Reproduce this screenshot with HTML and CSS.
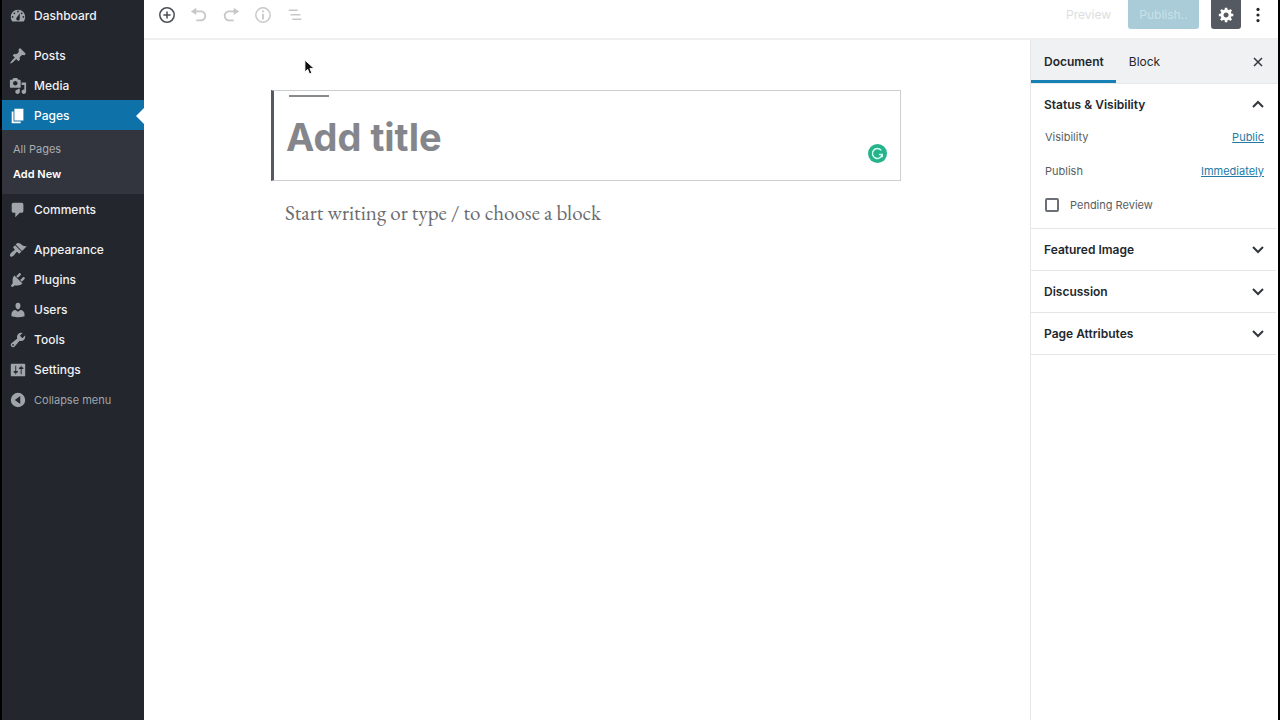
FILE: index.html
```html
<!DOCTYPE html>
<html lang="en">
<head>
<meta charset="utf-8">
<meta name="viewport" content="width=device-width, initial-scale=1">
<title>Add New Page</title>
<link rel="stylesheet" href="styles.css">
</head>
<body>
<div class="app">
  <nav class="menu" aria-label="Main menu">
    <a class="menu-item" href="#"><svg class="menu-icon" viewBox="0 0 20 20"><path d="M3.76 16h12.48c1.1-1.37 1.76-3.11 1.76-5 0-4.42-3.58-8-8-8s-8 3.58-8 8c0 1.89.66 3.63 1.76 5zM10 4c.55 0 1 .45 1 1s-.45 1-1 1-1-.45-1-1 .45-1 1-1zM6 6c.55 0 1 .45 1 1s-.45 1-1 1-1-.45-1-1 .45-1 1-1zm8 0c.55 0 1 .45 1 1s-.45 1-1 1-1-.45-1-1 .45-1 1-1zm-5.37 5.55L12 7v6c0 1.1-.9 2-2 2s-2-.9-2-2c0-.57.24-1.08.63-1.45zM4 10c.55 0 1 .45 1 1s-.45 1-1 1-1-.45-1-1 .45-1 1-1zm12 0c.55 0 1 .45 1 1s-.45 1-1 1-1-.45-1-1 .45-1 1-1z"/></svg>Dashboard</a>
    <a class="menu-item group-start" href="#"><svg class="menu-icon" viewBox="0 0 20 20"><path d="M10.44 3.02l1.82-1.82 6.36 6.35-1.83 1.82c-1.05-.68-2.48-.57-3.41.36l-.75.75c-.92.93-1.04 2.35-.35 3.41l-1.83 1.82-2.41-2.41-2.8 2.79c-.42.42-3.38 2.71-3.8 2.29s1.86-3.39 2.28-3.81l2.79-2.79L4.1 9.36l1.83-1.82c1.05.69 2.48.57 3.4-.36l.75-.75c.93-.92 1.05-2.35.36-3.41z"/></svg>Posts</a>
    <a class="menu-item" href="#"><svg class="menu-icon" viewBox="0 0 20 20"><path d="M13 11V4c0-.55-.45-1-1-1h-1.67L9 1H5L3.67 3H2c-.55 0-1 .45-1 1v7c0 .55.45 1 1 1h10c.55 0 1-.45 1-1zM7 4.5c1.38 0 2.5 1.12 2.5 2.5S8.38 9.5 7 9.5 4.5 8.38 4.5 7 5.62 4.5 7 4.5zM14 6h5v10.5c0 1.38-1.12 2.5-2.5 2.5S14 17.88 14 16.5s1.12-2.5 2.5-2.5c.17 0 .34.02.5.05V9h-3V6zm-4 8.05V13h2v3.5c0 1.38-1.12 2.5-2.5 2.5S7 17.88 7 16.5 8.12 14 9.5 14c.17 0 .34.02.5.05z"/></svg>Media</a>
    <a class="menu-item current" href="#"><svg class="menu-icon" viewBox="0 0 20 20"><path d="M6 15V2h10v13H6zm-1 1h8v2H3V5h2v11z"/></svg>Pages</a>
    <div class="submenu">
      <a class="submenu-item" href="#">All Pages</a>
      <a class="submenu-item active" href="#">Add New</a>
    </div>
    <a class="menu-item" href="#"><svg class="menu-icon" viewBox="0 0 20 20"><path d="M5 2h9c1.1 0 2 .9 2 2v7c0 1.1-.9 2-2 2h-2l-5 5v-5H5c-1.1 0-2-.9-2-2V4c0-1.1.9-2 2-2z"/></svg>Comments</a>
    <a class="menu-item group-start" href="#"><svg class="menu-icon" viewBox="0 0 20 20"><path d="M14.48 11.06L7.41 3.99l1.5-1.5c.5-.56 2.3-.47 3.51.32 1.21.8 1.43 1.28 2.91 2.1 1.18.64 2.45 1.26 4.45.85zm-.71.71L6.7 4.7 4.93 6.47c-.39.39-.39 1.02 0 1.41l1.06 1.06c.39.39.39 1.03 0 1.42-.6.6-1.43 1.11-2.21 1.69-.35.26-.7.53-1.01.84C1.43 14.23.4 16.08 1.4 17.07c.99 1 2.84-.03 4.18-1.36.31-.31.58-.66.85-1.02.57-.78 1.08-1.61 1.69-2.21.39-.39 1.02-.39 1.41 0l1.06 1.06c.39.39 1.02.39 1.41 0z"/></svg>Appearance</a>
    <a class="menu-item" href="#"><svg class="menu-icon" viewBox="0 0 20 20"><path d="M13.11 4.36L9.87 7.6 8 5.73l3.24-3.24c.35-.34 1.05-.2 1.56.32.52.51.66 1.21.31 1.55zm-8 1.77l.91-1.12 9.01 9.01-1.19.84c-.71.71-2.63 1.16-3.82 1.16H6.14L4.9 17.26c-.59.59-1.54.59-2.12 0-.59-.58-.59-1.53 0-2.12l1.24-1.24v-3.88c0-1.13.4-3.19 1.09-3.89zm7.26 3.97l3.24-3.24c.34-.35 1.04-.21 1.55.31.52.51.66 1.21.31 1.55l-3.24 3.25z"/></svg>Plugins</a>
    <a class="menu-item" href="#"><svg class="menu-icon" viewBox="0 0 20 20"><path d="M10 9.25c-2.27 0-2.73-3.44-2.73-3.44C7 4.02 7.82 2 9.97 2c2.16 0 2.98 2.02 2.71 3.81 0 0-.41 3.44-2.68 3.44zm0 2.57L12.72 10c2.39 0 4.52 2.33 4.52 4.53v2.49s-3.65 1.13-7.24 1.13c-3.65 0-7.24-1.13-7.24-1.13v-2.49c0-2.25 1.94-4.48 4.47-4.48z"/></svg>Users</a>
    <a class="menu-item" href="#"><svg class="menu-icon" viewBox="0 0 20 20"><path d="M16.68 9.77c-1.34 1.34-3.3 1.67-4.95.99l-5.41 6.52c-.99.99-2.59.99-3.58 0s-.99-2.59 0-3.57l6.52-5.42c-.68-1.65-.35-3.61.99-4.95 1.28-1.28 3.12-1.62 4.72-1.06l-2.89 2.89 2.82 2.82 2.86-2.87c.53 1.58.18 3.39-1.08 4.65zM3.81 16.21c.4.39 1.04.39 1.43 0 .4-.4.4-1.04 0-1.43-.39-.4-1.03-.4-1.43 0-.39.39-.39 1.03 0 1.43z"/></svg>Tools</a>
    <a class="menu-item" href="#"><svg class="menu-icon" viewBox="0 0 20 20"><path d="M18 16V4c0-.55-.45-1-1-1H3c-.55 0-1 .45-1 1v12c0 .55.45 1 1 1h14c.55 0 1-.45 1-1zM8 11h1c.55 0 1 .45 1 1s-.45 1-1 1H8v1.5c0 .28-.22.5-.5.5s-.5-.22-.5-.5V13H6c-.55 0-1-.45-1-1s.45-1 1-1h1V5.500c0-.28.22-.5.5-.5s.5.22.5.5V11zm5-2h-1c-.55 0-1-.45-1-1s.45-1 1-1h1V5.500c0-.28.22-.5.5-.5s.5.22.5.5V7h1c.55 0 1 .45 1 1s-.45 1-1 1h-1v5.500c0 .28-.22.5-.5.5s-.5-.22-.5-.5V9z"/></svg>Settings</a>
    <button class="menu-item collapse" type="button"><svg class="menu-icon" viewBox="0 0 20 20"><path fill-rule="evenodd" d="M10 2a8 8 0 1 0 0 16 8 8 0 0 0 0-16zM12.500 5.500v9L6.500 10z"/></svg>Collapse menu</button>
  </nav>

  <div class="editor">
    <header class="toolbar">
      <button class="tool" type="button" aria-label="Add block"><svg viewBox="0 0 20 20"><circle cx="10" cy="10" r="8" fill="none" stroke="currentColor" stroke-width="1.700"/><path d="M10 6v8M6 10h8" stroke="currentColor" stroke-width="1.700"/></svg></button>
      <button class="tool muted" type="button" aria-label="Undo"><svg viewBox="0 0 20 20"><path d="M12 5H7V2L1 6l6 4V7h5c2.200 0 4 1.800 4 4s-1.800 4-4 4H7v2h5c3.300 0 6-2.700 6-6s-2.700-6-6-6z"/></svg></button>
      <button class="tool muted" type="button" aria-label="Redo"><svg viewBox="0 0 20 20"><path d="M8 5h5V2l6 4-6 4V7H8c-2.200 0-4 1.800-4 4s1.800 4 4 4h5v2H8c-3.300 0-6-2.700-6-6s2.700-6 6-6z"/></svg></button>
      <button class="tool muted" type="button" aria-label="Content structure"><svg viewBox="0 0 20 20"><circle cx="10" cy="10" r="8" fill="none" stroke="currentColor" stroke-width="1.600"/><path d="M9 5h2v2H9zM9 8.500h2V15H9z"/></svg></button>
      <button class="tool muted" type="button" aria-label="Block navigation"><svg viewBox="0 0 20 20"><path d="M3 4h10v1.600H3zM5 9h11v1.600H5zM7 14h10v1.600H7z"/></svg></button>
      <div class="actions">
        <button class="preview" type="button">Preview</button>
        <button class="publish" type="button">Publish..</button>
        <button class="cog" type="button" aria-label="Settings"><svg viewBox="0 0 20 20"><path d="M18 12h-2.180c-.17.7-.44 1.350-.81 1.930l1.540 1.540-2.100 2.100-1.540-1.540c-.58.36-1.230.63-1.910.79V19H8v-2.180c-.68-.16-1.330-.43-1.910-.79l-1.540 1.540-2.120-2.120 1.540-1.540c-.36-.58-.63-1.230-.79-1.910H1V9.030h2.170c.16-.7.44-1.350.8-1.940L2.430 5.550l2.100-2.100 1.540 1.540c.58-.37 1.240-.64 1.930-.81V2h3v2.180c.68.16 1.330.43 1.910.79l1.540-1.540 2.120 2.120-1.540 1.540c.36.59.64 1.240.8 1.940H18V12zm-8.500 1.500c1.660 0 3-1.340 3-3s-1.340-3-3-3-3 1.340-3 3 1.340 3 3 3z"/></svg></button>
        <button class="more" type="button" aria-label="More"><svg viewBox="0 0 20 20"><circle cx="10" cy="3" r="2"/><circle cx="10" cy="10" r="2"/><circle cx="10" cy="17" r="2"/></svg></button>
      </div>
    </header>

    <div class="workspace">
      <main class="canvas">
        <div class="document">
          <div class="title-block">
            <input class="title-input" type="text" placeholder="Add title" aria-label="Add title">
            <svg class="checker" viewBox="0 0 20 20"><circle cx="10" cy="10" r="10" fill="#24b38b"/><path d="M13.900 6.700A5.200 5.200 0 1 0 15 11h-3.500M15 10.500V14" fill="none" stroke="#d5fff1" stroke-width="1.500"/></svg>
          </div>
          <input class="body-input" type="text" placeholder="Start writing or type / to choose a block" aria-label="Page content">
        </div>
        <svg class="pointer" viewBox="0 0 12 18"><path d="M1 1v13l3-3 2 5 2.500-1-2-5H11z" fill="#111" stroke="#fff"/></svg>
      </main>

      <aside class="settings">
        <div class="tabs">
          <button class="tab selected" type="button">Document</button>
          <button class="tab" type="button">Block</button>
          <button class="close" type="button" aria-label="Close settings"><svg viewBox="0 0 14 14"><path d="M3 3l8 8M11 3l-8 8"/></svg></button>
        </div>
        <section class="panel">
          <button class="panel-head" type="button">Status &amp; Visibility<svg viewBox="0 0 14 14"><path d="M2 9l5-5 5 5"/></svg></button>
          <div class="panel-body">
            <div class="row"><span>Visibility</span><a href="#">Public</a></div>
            <div class="row"><span>Publish</span><a href="#">Immediately</a></div>
            <div class="row check"><input type="checkbox" id="pending"><label for="pending">Pending Review</label></div>
          </div>
        </section>
        <section class="panel"><button class="panel-head" type="button">Featured Image<svg viewBox="0 0 14 14"><path d="M2 4l5 5 5-5"/></svg></button></section>
        <section class="panel"><button class="panel-head" type="button">Discussion<svg viewBox="0 0 14 14"><path d="M2 4l5 5 5-5"/></svg></button></section>
        <section class="panel"><button class="panel-head" type="button">Page Attributes<svg viewBox="0 0 14 14"><path d="M2 4l5 5 5-5"/></svg></button></section>
      </aside>
    </div>
  </div>
</div>
</body>
</html>
```
FILE: styles.css
```css
* {
  box-sizing: border-box;
}

body {
  margin: 0;
  background: #000;
  color: #23282d;
  font-family: Inter, "Liberation Sans", sans-serif;
  font-size: 12px;
}

button,
input {
  margin: 0;
  padding: 0;
  border: 0;
  background: none;
  color: inherit;
  font: inherit;
}

svg {
  display: block;
  fill: currentColor;
}

.app {
  display: flex;
  min-height: 100vh;
  padding: 0 2px;
}

/* Admin menu */
.menu {
  flex: none;
  width: 142px;
  background: #23262d;
}

.menu-item {
  position: relative;
  display: flex;
  align-items: center;
  gap: 7px;
  width: 100%;
  height: 30px;
  padding: 1px 0 0 7px;
  color: #f0f1f3;
  font-size: 12px;
  font-weight: 500;
  text-decoration: none;
}

.menu-icon {
  width: 18px;
  height: 18px;
  color: #a0a5aa;
}

.group-start {
  margin-top: 10px;
}

.current {
  background: #0e72a8;
  color: #fff;
}

.current .menu-icon {
  color: #fff;
}

.current::after {
  content: "";
  position: absolute;
  right: 0;
  border: 8px solid transparent;
  border-left-width: 0;
  border-right-color: #fff;
}

.submenu {
  padding: 7px 0;
  background: #32353d;
}

.submenu-item {
  display: block;
  padding-left: 11px;
  color: #a9adb3;
  font-size: 11px;
  line-height: 25px;
  text-decoration: none;
}

.submenu-item.active {
  color: #fff;
  font-weight: 600;
}

.collapse {
  color: #a0a5aa;
  font-size: 11px;
  font-weight: 400;
}

/* Editor */
.editor {
  display: flex;
  flex: 1;
  flex-direction: column;
  min-width: 0;
  background: #fff;
}

.toolbar {
  display: flex;
  align-items: center;
  gap: 14px;
  padding: 0 12px 9px 14px;
  border-bottom: 2px solid #eeeff0;
}

.tool {
  color: #4b4f54;
}

.tool svg {
  width: 18px;
  height: 18px;
}

.muted {
  color: #c6c7c9;
}

.actions {
  display: flex;
  align-items: center;
  margin-left: auto;
}

.preview {
  padding: 0 17px;
  color: #dcdddf;
}

.publish {
  width: 71px;
  height: 29px;
  border-radius: 0 0 3px 3px;
  background: #a9ccd8;
  color: #c9e0e8;
}

.cog {
  display: flex;
  align-items: center;
  justify-content: center;
  width: 30px;
  height: 29px;
  margin: 0 9px 0 12px;
  border-radius: 0 0 3px 3px;
  background: #555961;
  color: #fff;
}

.cog svg {
  width: 17px;
  height: 17px;
}

.more svg {
  width: 16px;
  height: 16px;
}

.workspace {
  display: flex;
  flex: 1;
}

.canvas {
  position: relative;
  flex: 1;
  min-width: 0;
  padding: 50px 18px 50px 16px;
}

.document {
  max-width: 630px;
  margin: 0 auto;
}

.title-block {
  position: relative;
  display: flex;
  align-items: center;
  height: 91px;
  padding: 2px 0 0 12px;
  border: 1px solid #ccced0;
  border-left: 3px solid #555a60;
}

.title-block::before {
  content: "";
  position: absolute;
  top: 4px;
  left: 15px;
  width: 40px;
  height: 2px;
  background: #888b8e;
}

.title-input {
  width: 100%;
  height: 50px;
  font-size: 38px;
  font-weight: 700;
  outline: 0;
}

.title-input::placeholder {
  color: #85868b;
}

.checker {
  position: absolute;
  right: 13px;
  bottom: 17px;
  width: 19px;
  height: 19px;
}

.body-input {
  width: 100%;
  height: 30px;
  margin-top: 16px;
  padding-left: 14px;
  font-family: "EB Garamond", "Liberation Serif", serif;
  font-size: 21px;
  outline: 0;
}

.body-input::placeholder {
  color: #6b6c70;
}

.pointer {
  position: absolute;
  top: 19px;
  left: 160px;
  width: 11px;
  height: 17px;
}

/* Settings sidebar */
.settings {
  flex: none;
  width: 248px;
  border-left: 1px solid #e5e6e8;
}

.tabs {
  display: flex;
  height: 44px;
  padding-right: 13px;
  border-bottom: 1px solid #e8e9eb;
  background: #f0f1f3;
}

.tab {
  padding: 3px 12px 0 13px;
  border-bottom: 3px solid transparent;
}

.tab.selected {
  border-bottom-color: #1781b5;
  font-weight: 600;
}

.close {
  margin-left: auto;
}

.close svg,
.panel-head svg {
  width: 14px;
  height: 14px;
  fill: none;
  stroke: #33373c;
  stroke-width: 2;
}

.close svg {
  stroke-width: 1.5;
}

.panel {
  margin-right: 2px;
  border-bottom: 1px solid #e5e6e8;
}

.panel-head {
  display: flex;
  align-items: center;
  justify-content: space-between;
  width: 100%;
  height: 41px;
  padding: 0 11px 0 13px;
  font-weight: 600;
}

.panel-body {
  display: grid;
  gap: 10px;
  padding: 0 12px 11px 14px;
  color: #5a5d61;
  font-size: 11px;
}

.row {
  display: flex;
  align-items: center;
  justify-content: space-between;
  height: 24px;
}

.row a {
  color: #237aa5;
}

.row.check {
  justify-content: flex-start;
  gap: 11px;
}

.check input {
  width: 14px;
  height: 14px;
  border: 2px solid #6c7076;
  border-radius: 2px;
  appearance: none;
}
```
